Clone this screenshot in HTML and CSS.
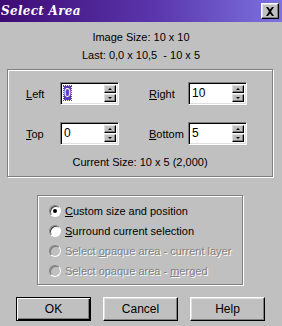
FILE: index.html
```html
<!DOCTYPE html>
<html lang="en">
<head>
    <meta charset="UTF-8">
    <title>Select Area</title>
    <link rel="stylesheet" href="styles.css">
</head>
<body>
    <div class="dialog">
        <div class="titlebar">
            <span class="title">Select Area</span>
            <span class="close">
                <svg width="10" height="9" viewBox="0 0 10 9"><path d="M1 0h2l2 2.5L7 0h2L6 4.5 9 9H7L5 6.5 3 9H1l3-4.5z" fill="#000"/></svg>
            </span>
        </div>

        <div class="info">
            <p>Image Size: 10 x 10</p>
            <p>Last: 0,0 x 10,5&nbsp; - 10 x 5</p>
        </div>

        <div class="group group-size">
            <div class="row">
                <div class="pair">
                    <span class="lbl"><u>L</u>eft</span>
                    <div class="spin">
                        <span class="value"><span class="sel">0</span></span>
                        <span class="arrows"><span class="up"></span><span class="down"></span></span>
                    </div>
                </div>
                <div class="pair pair-right">
                    <span class="lbl"><u>R</u>ight</span>
                    <div class="spin">
                        <span class="value">10</span>
                        <span class="arrows"><span class="up"></span><span class="down"></span></span>
                    </div>
                </div>
            </div>
            <div class="row">
                <div class="pair">
                    <span class="lbl"><u>T</u>op</span>
                    <div class="spin">
                        <span class="value">0</span>
                        <span class="arrows"><span class="up"></span><span class="down"></span></span>
                    </div>
                </div>
                <div class="pair pair-right">
                    <span class="lbl"><u>B</u>ottom</span>
                    <div class="spin">
                        <span class="value">5</span>
                        <span class="arrows"><span class="up"></span><span class="down"></span></span>
                    </div>
                </div>
            </div>
            <p class="current">Current Size: 10 x 5 (2,000)</p>
        </div>

        <div class="group group-mode">
            <div class="radio checked"><span class="dot"></span><span><u>C</u>ustom size and position</span></div>
            <div class="radio"><span class="dot"></span><span><u>S</u>urround current selection</span></div>
            <div class="radio disabled"><span class="dot"></span><span>Select <u>o</u>paque area - current layer</span></div>
            <div class="radio disabled"><span class="dot"></span><span>Select opaque area - <u>m</u>erged</span></div>
        </div>

        <div class="buttons">
            <button class="btn default">OK</button>
            <button class="btn">Cancel</button>
            <button class="btn">Help</button>
        </div>
    </div>
</body>
</html>
```

FILE: styles.css
```css
body {
    margin: 0;
    background: #c0c0c0;
    font-family: "Liberation Sans", Arial, sans-serif;
    font-size: 11px;
    color: #000;
}
p {
    margin: 0;
}
.dialog {
    width: 282px;
    height: 326px;
    overflow: hidden;
    background: #c0c0c0;
}
.titlebar {
    height: 22px;
    display: flex;
    align-items: center;
    justify-content: space-between;
    background: linear-gradient(to right, #3e0b74, #5a36ac 55%, #7d72e0);
}
.title {
    color: #fff;
    font-family: "DejaVu Serif", serif;
    font-style: italic;
    font-weight: bold;
    font-size: 12px;
    letter-spacing: 0.3px;
    padding-left: 1px;
}
.close {
    width: 18px;
    height: 16px;
    margin-right: 3px;
    box-sizing: border-box;
    display: flex;
    align-items: center;
    justify-content: center;
    background: #c0c0c0;
    border: 1px solid;
    border-color: #fff #000 #000 #fff;
    box-shadow: inset -1px -1px #808080, inset 1px 1px #dfdfdf;
}
.info {
    padding-top: 6px;
    text-align: center;
    line-height: 18px;
}
.group {
    box-sizing: border-box;
    border: 1px solid #808080;
    box-shadow: inset 1px 1px #fff, 1px 1px #fff;
}
.group-size {
    margin: 5px 0 0 7px;
    width: 266px;
    height: 108px;
    padding: 12px 0 0 18px;
}
.row {
    display: flex;
    align-items: center;
    height: 23px;
    margin-bottom: 17px;
}
.row + .row {
    margin-bottom: 0;
}
.pair {
    display: flex;
    align-items: center;
    width: 123px;
}
.lbl {
    width: 34px;
}
.pair-right .lbl {
    width: 39px;
}
.spin {
    width: 59px;
    height: 23px;
    box-sizing: border-box;
    display: flex;
    background: #fff;
    border: 1px solid;
    border-color: #808080 #fff #fff #808080;
    box-shadow: inset 1px 1px #000, inset -1px -1px #dfdfdf;
    padding: 2px 2px 2px 3px;
}
.value {
    flex: 1;
    line-height: 17px;
    font-size: 12px;
}
.sel {
    background: #5a3cb4;
    color: #fff;
    outline: 1px dotted #5a3cb4;
}
.arrows {
    width: 12px;
    display: flex;
    flex-direction: column;
    gap: 1px;
}
.up, .down {
    flex: 1;
    box-sizing: border-box;
    background: #c0c0c0;
    border: 1px solid;
    border-color: #dfdfdf #000 #000 #dfdfdf;
    box-shadow: inset -1px -1px #808080;
    display: flex;
    align-items: center;
    justify-content: center;
}
.up::after, .down::after {
    content: "";
    border-left: 2px solid transparent;
    border-right: 2px solid transparent;
}
.up::after {
    border-bottom: 2px solid #000;
}
.down::after {
    border-top: 2px solid #000;
}
.current {
    margin: 8px 0 0 -18px;
    text-align: center;
    line-height: 18px;
}
.group-mode {
    margin: 18px 0 0 37px;
    width: 206px;
    height: 90px;
    padding: 5px 0 0 11px;
}
.radio {
    display: flex;
    align-items: center;
    height: 20px;
    white-space: nowrap;
}
.dot {
    flex: none;
    width: 12px;
    height: 12px;
    box-sizing: border-box;
    border-radius: 50%;
    margin-right: 4px;
    background: #fff;
    border: 1px solid;
    border-color: #808080 #fff #fff #808080;
    box-shadow: inset 1px 1px #404040;
    display: flex;
    align-items: center;
    justify-content: center;
}
.checked .dot::after {
    content: "";
    width: 4px;
    height: 4px;
    border-radius: 50%;
    background: #000;
}
.disabled {
    color: #808080;
    text-shadow: 1px 1px #fff;
}
.disabled .dot {
    background: #c0c0c0;
    box-shadow: inset 1px 1px #808080;
}
.buttons {
    display: flex;
    gap: 12px;
    margin: 12px 0 0 16px;
}
.btn {
    width: 75px;
    height: 24px;
    box-sizing: border-box;
    padding: 0;
    font-family: "Liberation Sans", Arial, sans-serif;
    font-size: 12px;
    color: #000;
    background: #c0c0c0;
    border: 1px solid;
    border-color: #fff #000 #000 #fff;
    box-shadow: inset -1px -1px #808080, inset 1px 1px #dfdfdf;
}
.btn.default {
    border: 1px solid #000;
    box-shadow: inset 1px 1px #fff, inset -1px -1px #000, inset -2px -2px #808080;
}
```
